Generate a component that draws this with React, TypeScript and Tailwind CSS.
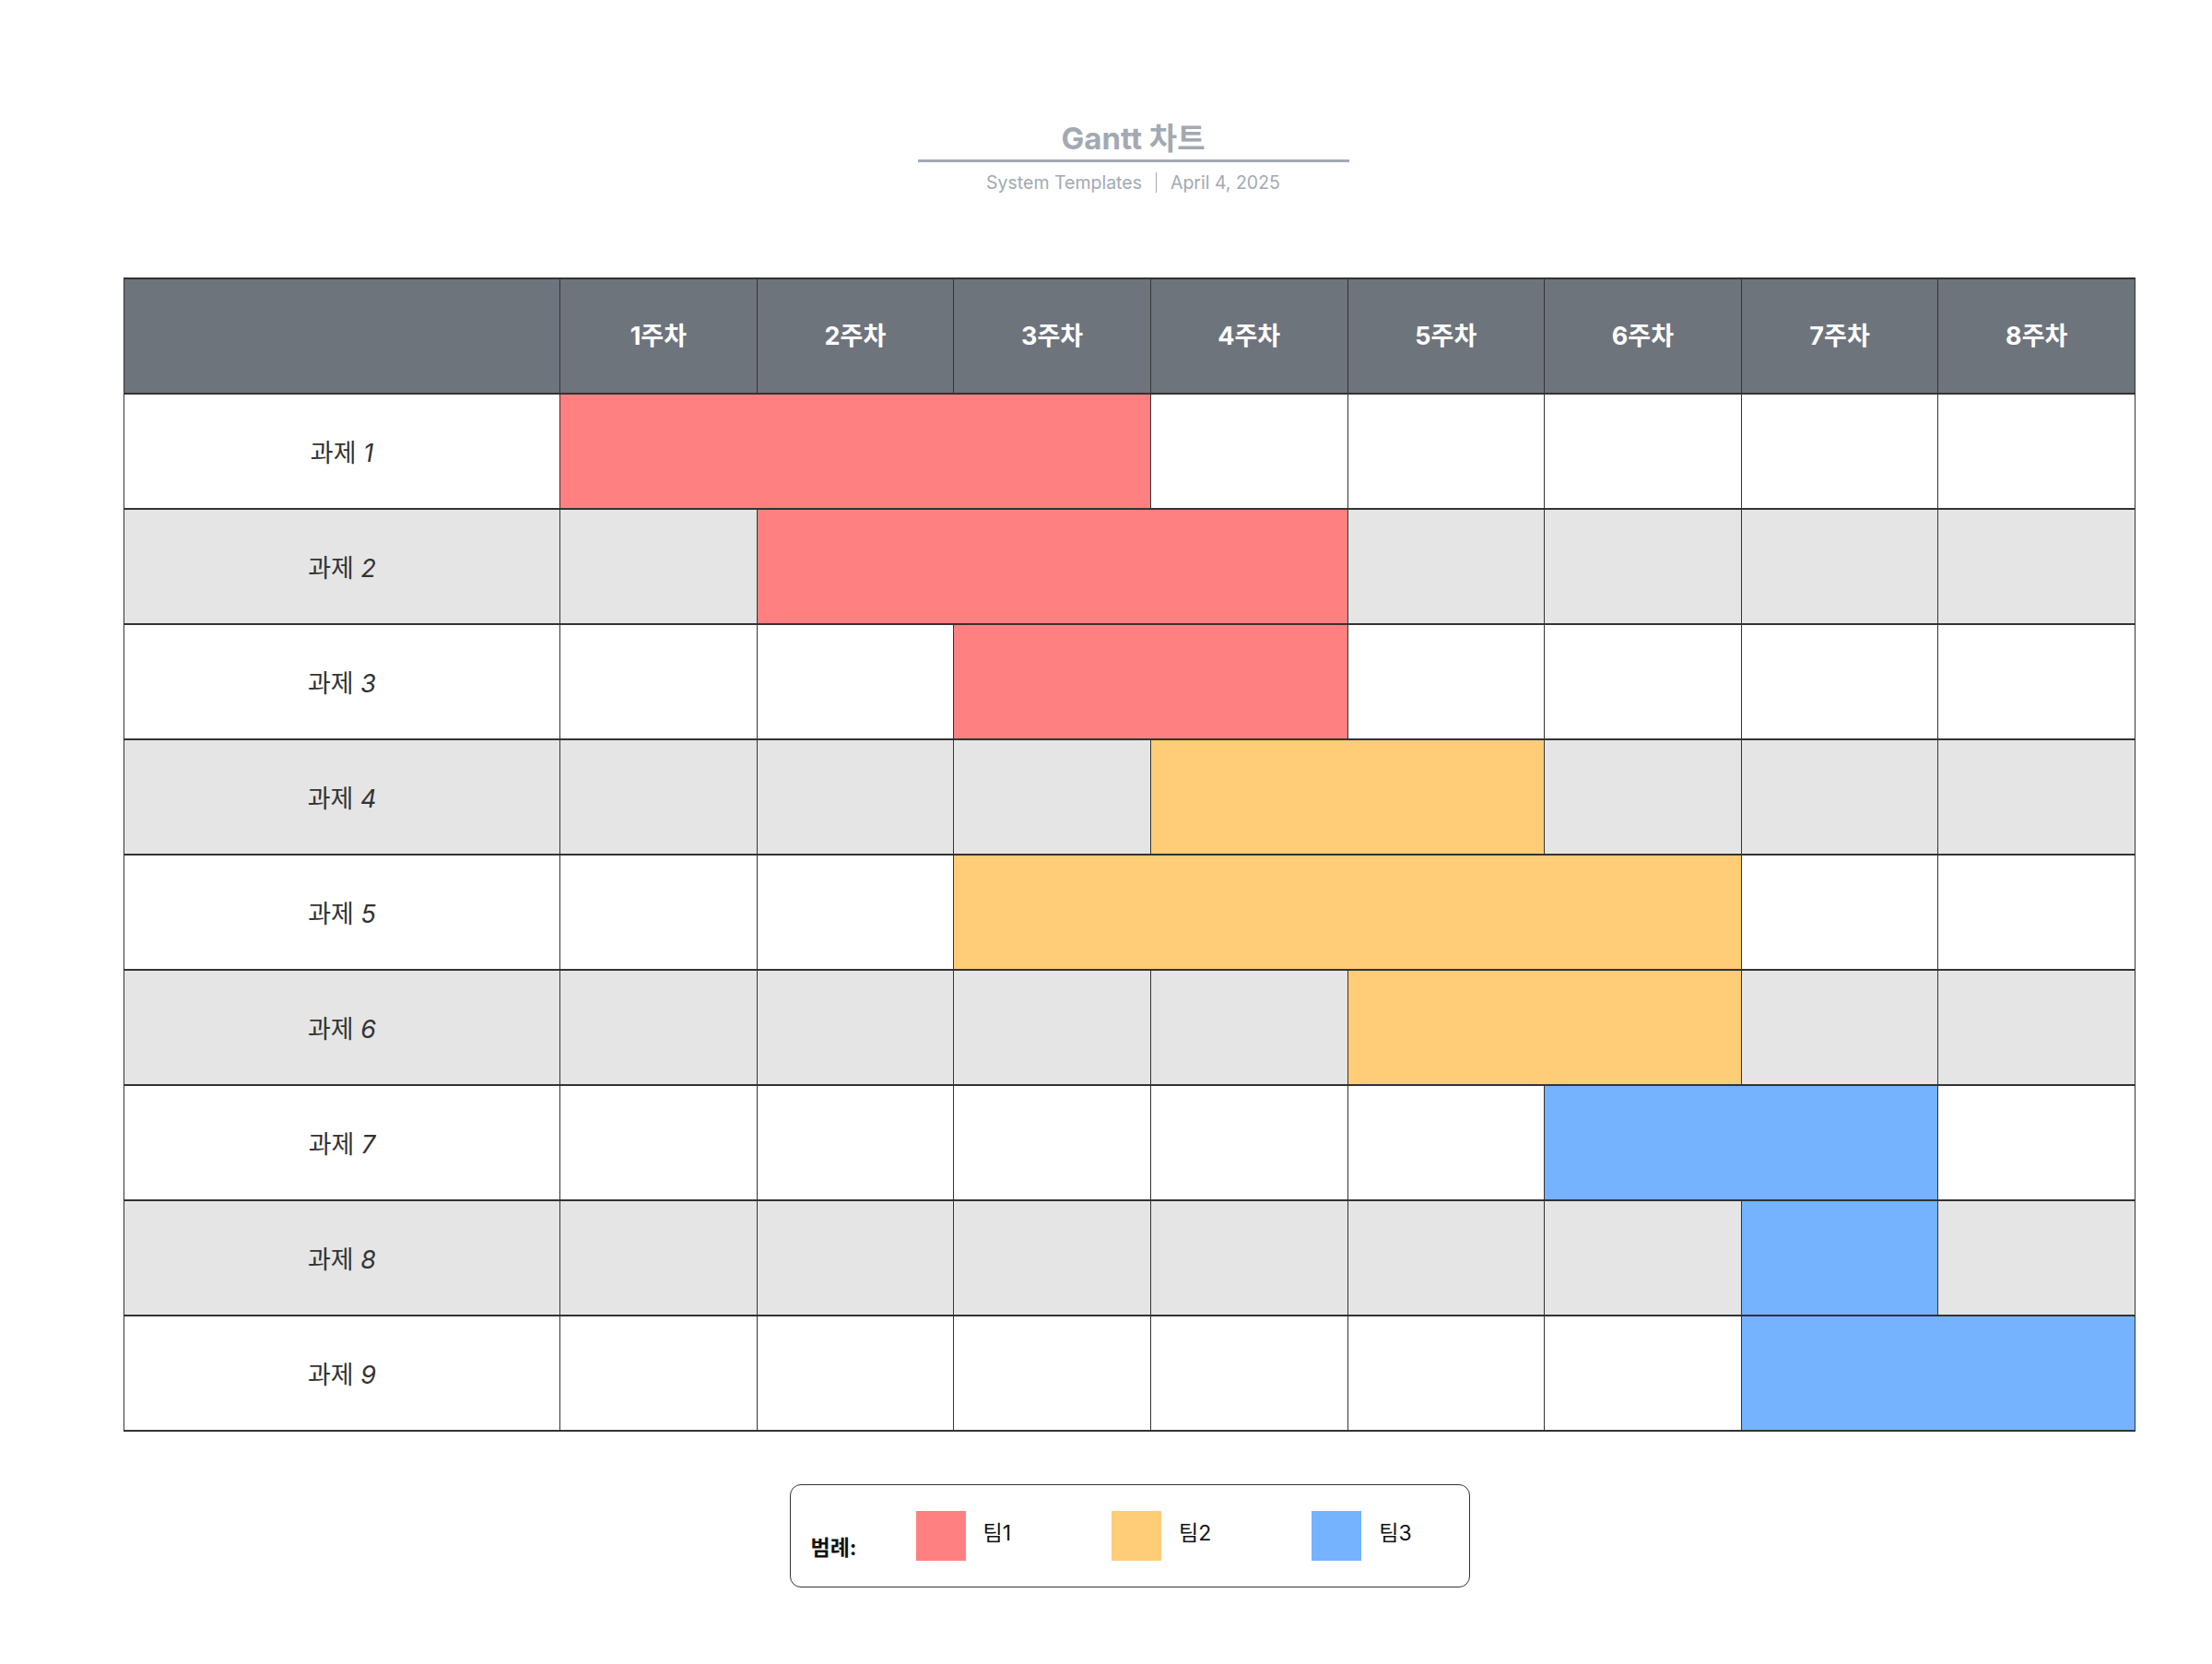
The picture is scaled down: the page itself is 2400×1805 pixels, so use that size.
const weeks = [1, 2, 3, 4, 5, 6, 7, 8];

const tasks = [
  { id: 1, start: 1, span: 3, color: "bg-[#ff8080]" },
  { id: 2, start: 2, span: 3, color: "bg-[#ff8080]" },
  { id: 3, start: 3, span: 2, color: "bg-[#ff8080]" },
  { id: 4, start: 4, span: 2, color: "bg-[#ffcc78]" },
  { id: 5, start: 3, span: 4, color: "bg-[#ffcc78]" },
  { id: 6, start: 5, span: 2, color: "bg-[#ffcc78]" },
  { id: 7, start: 6, span: 2, color: "bg-[#75b2ff]" },
  { id: 8, start: 7, span: 1, color: "bg-[#75b2ff]" },
  { id: 9, start: 7, span: 2, color: "bg-[#75b2ff]" },
];

const legend = [
  { label: "팀1", color: "bg-[#ff8080]" },
  { label: "팀2", color: "bg-[#ffcc78]" },
  { label: "팀3", color: "bg-[#75b2ff]" },
];

const cell = "border-x border-y-2 border-[#333333]";

const App = () => {
  return (
    <div className="w-[2400px] min-h-[1805px] bg-white pl-[134px] pt-[130px] font-['Inter','Noto_Sans_CJK_KR',sans-serif]">
      <div className="w-[2183px]">
        {/* Title */}
        <div className="flex flex-col items-center pl-[8px]">
          <h1 className="text-[33px] leading-[40px] font-bold text-[#a3a9b2]">Gantt 차트</h1>
          <div className="mt-[3px] h-[3px] w-[468px] bg-[#a3a9b2]" />
          <div className="mt-[8px] flex items-center gap-[15px] text-[19.5px] leading-[28px] text-[#a3a9b2]">
            <span>System Templates</span>
            <span className="h-[22px] w-px bg-[#a3a9b2]" />
            <span>April 4, 2025</span>
          </div>
        </div>

        {/* Chart */}
        <table className="mt-[89px] w-[2183px] table-fixed border-collapse">
          <colgroup>
            <col className="w-[473px]" />
            {weeks.map((w) => (
              <col key={w} />
            ))}
          </colgroup>
          <thead>
            <tr className="h-[125px] bg-[#6e747c]">
              <th className={cell} />
              {weeks.map((w) => (
                <th key={w} className={`${cell} pt-[2px] text-[27px] font-bold text-white`}>
                  {w}주차
                </th>
              ))}
            </tr>
          </thead>
          <tbody>
            {tasks.map((t, i) => {
              const before = weeks.filter((w) => w < t.start);
              const after = weeks.filter((w) => w >= t.start + t.span);
              return (
                <tr key={t.id} className={`h-[125px] ${i % 2 ? "bg-[#e5e5e5]" : "bg-white"}`}>
                  <td className={`${cell} pt-[5px] text-center text-[27px] text-[#333333]`}>
                    과제 <i>{t.id}</i>
                  </td>
                  {before.map((w) => (
                    <td key={w} className={cell} />
                  ))}
                  <td colSpan={t.span} className={`${cell} ${t.color}`} />
                  {after.map((w) => (
                    <td key={w} className={cell} />
                  ))}
                </tr>
              );
            })}
          </tbody>
        </table>

        {/* Legend */}
        <div className="mt-[57px] flex justify-center">
          <div className="flex h-[112px] w-[738px] items-center rounded-[12px] border-[1.5px] border-[#333333] pl-[22px]">
            <span className="mt-[26px] text-[23px] font-bold text-[#111111]">범례:</span>
            <div className="ml-[64px] flex items-center gap-[109px]">
              {legend.map((l) => (
                <div key={l.label} className="flex items-center gap-[19px]">
                  <span className={`h-[54px] w-[54px] ${l.color}`} />
                  <span className="-mt-[6px] text-[23px] text-[#111111]">{l.label}</span>
                </div>
              ))}
            </div>
          </div>
        </div>
      </div>
    </div>
  );
};

export default App;
